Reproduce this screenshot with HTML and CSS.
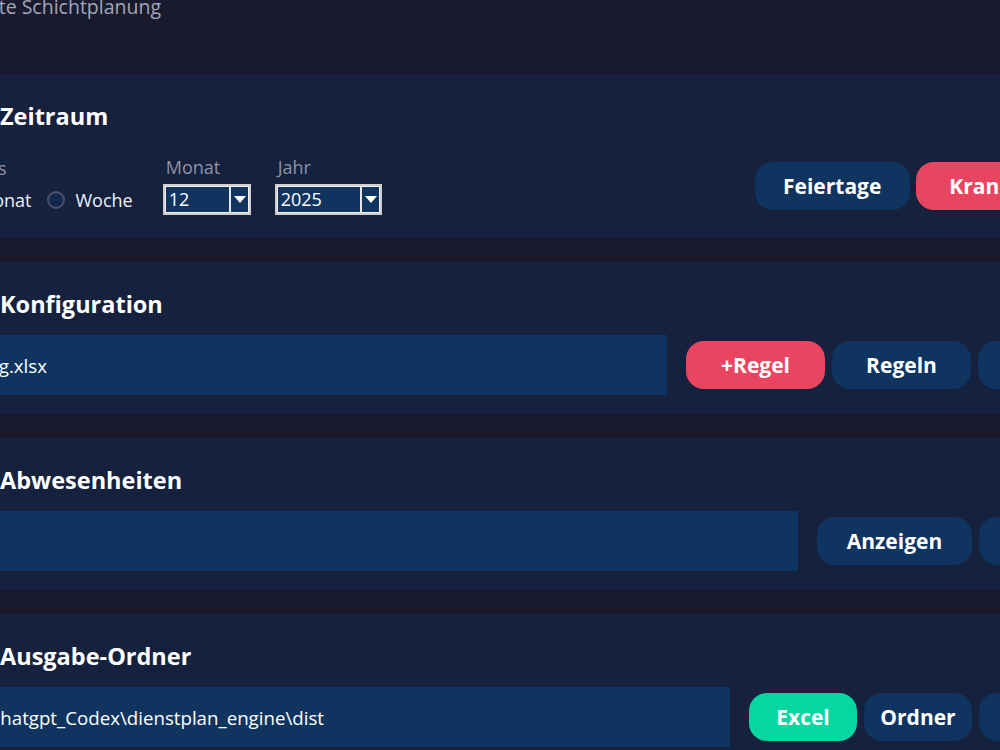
FILE: index.html
```html
<!DOCTYPE html>
<html lang="de">
<head>
<meta charset="utf-8">
<title>Dienstplan</title>
<link rel="stylesheet" href="styles.css">
</head>
<body>
<div class="app">
  <header class="header">
    <div class="title-clip"><span class="title">Automatisierte Schichtplanung</span></div>
  </header>

  <section class="panel panel-period">
    <h2 class="panel-title">Zeitraum</h2>
    <div class="row row-period">
      <div class="field field-mode">
        <span class="field-label">Modus</span>
        <div class="radio-row">
          <label class="radio"><span class="radio-dot"></span><span class="radio-text">Monat</span></label>
          <label class="radio"><span class="radio-dot"></span><span class="radio-text">Woche</span></label>
        </div>
      </div>
      <div class="field">
        <span class="field-label">Monat</span>
        <div class="combo combo-month">
          <span class="combo-value">12</span>
          <span class="combo-arrow"><svg width="12" height="7" viewBox="0 0 12 7"><path d="M0 0H12L6 7Z" fill="#ffffff"/></svg></span>
        </div>
      </div>
      <div class="field">
        <span class="field-label">Jahr</span>
        <div class="combo combo-year">
          <span class="combo-value">2025</span>
          <span class="combo-arrow"><svg width="12" height="7" viewBox="0 0 12 7"><path d="M0 0H12L6 7Z" fill="#ffffff"/></svg></span>
        </div>
      </div>
      <div class="btn-group btn-group-period">
        <button class="btn btn-navy btn-wide">Feiertage</button>
        <button class="btn btn-red btn-sick">Krankheit</button>
      </div>
    </div>
  </section>

  <section class="panel">
    <h2 class="panel-title">Konfiguration</h2>
    <div class="row">
      <div class="entry entry-config"><span class="entry-value value-config"><span>C:\Dienstplan\config.xlsx</span></span></div>
      <div class="btn-group">
        <button class="btn btn-red btn-mid">+Regel</button>
        <button class="btn btn-navy btn-mid">Regeln</button>
        <button class="btn btn-navy btn-wide">Öffnen</button>
      </div>
    </div>
  </section>

  <section class="panel">
    <h2 class="panel-title">Abwesenheiten</h2>
    <div class="row">
      <div class="entry entry-absence"></div>
      <div class="btn-group">
        <button class="btn btn-navy btn-wide">Anzeigen</button>
        <button class="btn btn-navy btn-wide">Laden</button>
      </div>
    </div>
  </section>

  <section class="panel">
    <h2 class="panel-title">Ausgabe-Ordner</h2>
    <div class="row">
      <div class="entry entry-output"><span class="entry-value value-output"><span>C:\Users\user\chatgpt_Codex\dienstplan_engine\dist</span></span></div>
      <div class="btn-group">
        <button class="btn btn-green btn-narrow">Excel</button>
        <button class="btn btn-navy btn-narrow">Ordner</button>
        <button class="btn btn-navy btn-wide">Wählen</button>
      </div>
    </div>
  </section>
</div>
</body>
</html>
```

FILE: styles.css
```css
html, body {
  margin: 0;
  padding: 0;
  overflow: hidden;
  background: #1a1a2e;
}

body {
  font-family: "Open Sans", "Noto Sans", sans-serif;
  color: #ffffff;
}

.app {
  width: 1000px;
  display: flex;
  flex-direction: column;
  gap: 24px;
}

/* top bar with the app subtitle */
.header {
  height: 50px;
}

.title-clip {
  width: 161px;
  display: flex;
  justify-content: flex-end;
  white-space: nowrap;
  margin-top: -3px;
}

.title {
  font-size: 19.5px;
  line-height: 20px;
  color: #a0a8b9;
}

/* section cards */
.panel {
  background: #16213e;
  height: 152px;
  box-sizing: border-box;
  padding: 27px 0 0 0;
  display: flex;
  flex-direction: column;
  gap: 16px;
}

.panel-period {
  height: 164px;
  gap: 25px;
}

.panel-title {
  margin: 0;
  font-size: 23.5px;
  line-height: 30px;
  font-weight: 700;
  color: #ffffff;
}

.row {
  display: flex;
  align-items: center;
  gap: 19px;
}

/* period row: mode radios, month and year pickers */
.row-period {
  gap: 0;
}

.field {
  display: flex;
  flex-direction: column;
  gap: 6px;
  flex-shrink: 0;
}

.field-label {
  font-size: 18px;
  line-height: 22px;
  color: #8e92a3;
  padding-left: 3px;
}

.field-mode {
  margin-left: -51px;
  margin-right: 30px;
}

.field-mode .field-label {
  padding-left: 0;
}

.radio-row {
  height: 30px;
  display: flex;
  align-items: center;
  gap: 16px;
}

.radio {
  display: flex;
  align-items: center;
  gap: 10px;
}

.radio-dot {
  width: 14px;
  height: 14px;
  border-radius: 50%;
  border: 2px solid #4b5266;
  background: #112a4e;
}

.radio-text {
  font-size: 18px;
  color: #eef0f5;
}

.combo {
  height: 31px;
  box-sizing: border-box;
  display: flex;
  border: 2px solid #cfcfd2;
  background: #0f3460;
  box-shadow: inset 0 0 0 1px #f2f2f2;
}

.combo-month {
  width: 88px;
  margin-right: 24px;
}

.combo-year {
  width: 107px;
}

.combo-value {
  flex: 1;
  font-size: 18px;
  line-height: 27px;
  padding-left: 4px;
  color: #ffffff;
}

.combo-arrow {
  width: 18px;
  display: flex;
  align-items: center;
  justify-content: center;
  border-left: 2px solid #e6e6e8;
}

/* pill buttons */
.btn-group {
  display: flex;
  gap: 7px;
  flex-shrink: 0;
}

.btn-group-period {
  margin-left: 373px;
  gap: 6px;
}

.btn {
  height: 48px;
  border: none;
  border-radius: 18px;
  font-family: "Open Sans", "Noto Sans", sans-serif;
  font-size: 21px;
  font-weight: 700;
  color: #ffffff;
  padding: 0;
  flex-shrink: 0;
  display: flex;
  align-items: center;
  justify-content: center;
}

.btn-wide { width: 155px; }
.btn-mid { width: 139px; }
.btn-narrow { width: 108px; }
.btn-sick { width: 172px; }

.btn-navy { background: #0f3460; }
.btn-red { background: #e94560; }
.btn-green { background: #06d6a0; }

/* path entries, scrolled to show the end of the value */
.entry {
  height: 60px;
  background: #0f3460;
  flex-shrink: 0;
  display: flex;
  align-items: center;
  overflow: hidden;
}

.entry-config { width: 667px; }
.entry-absence { width: 798px; }
.entry-output { width: 730px; }

.entry-value {
  display: flex;
  justify-content: flex-end;
  white-space: nowrap;
  font-size: 18.7px;
  color: #ffffff;
  flex-shrink: 0;
}

.value-config { width: 47px; }
.value-output { width: 324px; }
```
